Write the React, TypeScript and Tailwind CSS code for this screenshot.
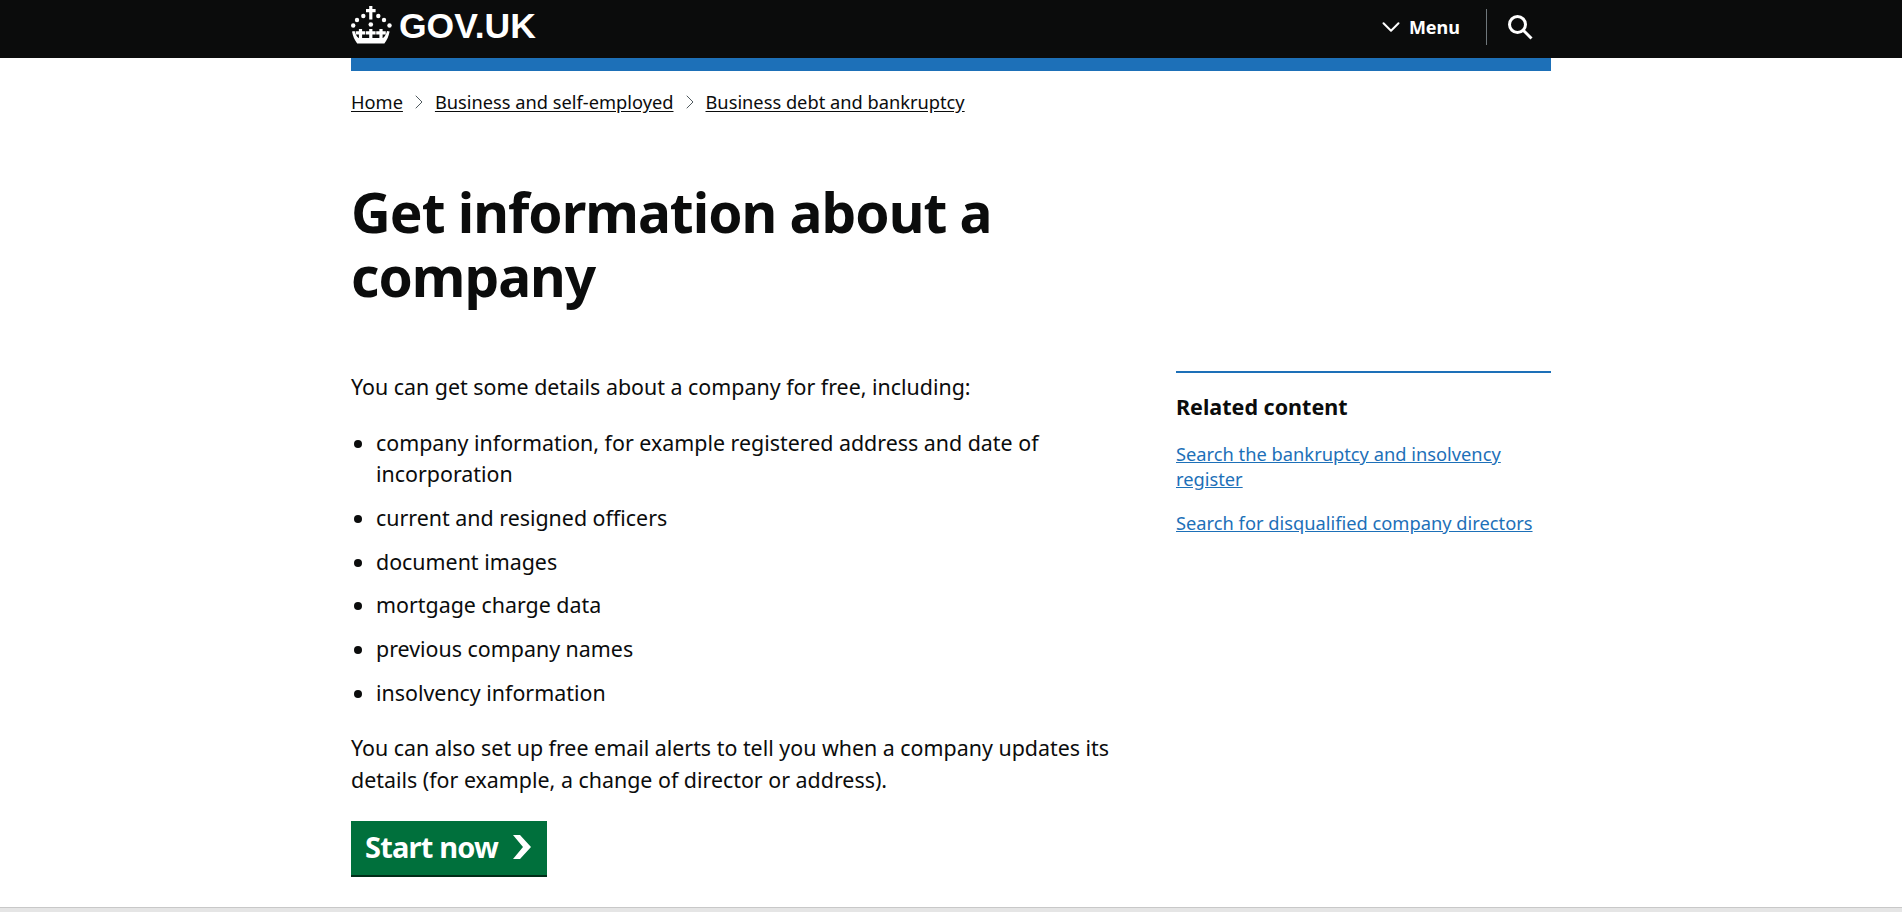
import React from 'react';
import { ChevronRight, ChevronDown } from 'lucide-react';

const listItems = [
  'company information, for example registered address and date of incorporation',
  'current and resigned officers',
  'document images',
  'mortgage charge data',
  'previous company names',
  'insolvency information',
];

const Fleur = ({ x }: { x: number }) => (
  <path d={`M${x - 1.6} 23h3.2v2.2h3.2v3.2h-3.2V34h-3.2v-5.6h-3.2v-3.2h3.2z`} />
);

const Crown = () => (
  <svg width="41" height="38" viewBox="0 0 41 38" fill="#fff" aria-hidden="true" className="mb-[4px]">
    <path d="M18.2 0h3.2v3h3.2v3.2h-3.2V13.5h-3.2V6.2H15V3h3.2z" />
    <circle cx="12.3" cy="10" r="2.2" />
    <circle cx="27.3" cy="10" r="2.2" />
    <circle cx="6" cy="14" r="2.2" />
    <circle cx="33" cy="14" r="2.2" />
    <circle cx="2.2" cy="19.5" r="2.2" />
    <circle cx="38.5" cy="19.5" r="2.2" />
    <circle cx="19.8" cy="18.5" r="2.3" />
    <Fleur x={9.5} />
    <Fleur x={19.8} />
    <Fleur x={30} />
    <path d="M1 25.5l2.6-.5c.8 3 2 5.5 4 7h24.4c2-1.5 3.2-4 4-7l2.6.5c-.8 4.5-2.6 8.5-5.2 12H6.2C3.6 34 1.8 30 1 25.5z" />
  </svg>
);

export default function App() {
  return (
    <div className='h-[912px] overflow-hidden bg-white text-[#0b0c0c] relative font-["Noto_Sans",Roboto,sans-serif]'>
      <header className="bg-[#0b0c0c] h-[58px]">
        <div className="w-[1200px] ml-[351px] flex items-center justify-between h-full">
          <div className="flex items-center gap-[7px] mb-[4px]">
            <Crown />
            <span className='font-["Liberation_Sans",Arial,sans-serif] font-bold text-[35.5px] leading-none text-white'>GOV.UK</span>
          </div>
          <div className="flex items-center text-white mb-[4px]">
            <ChevronDown className="w-[30px] h-[30px] mr-[3px]" strokeWidth={1.6} />
            <span className="font-bold text-[18px] mr-[26px]">Menu</span>
            <div className="w-px h-[36px] bg-[#6f777b] mr-[20px]" />
            <svg width="26" height="26" viewBox="0 0 26 26" fill="none" stroke="#fff" strokeWidth="3" className="mr-[18px]">
              <circle cx="10.5" cy="10.5" r="8" />
              <path d="M16.5 16.5L24.5 24.5" />
            </svg>
          </div>
        </div>
      </header>
      <div className="w-[1200px] ml-[351px]">
        <div className="h-[13px] bg-[#1d70b8]" />
        <nav className="flex items-center mt-[18px] text-[18.25px] leading-[25px]">
          <a className="underline underline-offset-2">Home</a>
          <ChevronRight className="w-[24px] h-[24px] mx-[4px] text-[#505a5f]" strokeWidth={1} />
          <a className="underline underline-offset-2">Business and self-employed</a>
          <ChevronRight className="w-[24px] h-[24px] mx-[4px] text-[#505a5f]" strokeWidth={1} />
          <a className="underline underline-offset-2">Business debt and bankruptcy</a>
        </nav>
        <h1 className="mt-[66px] w-[760px] font-bold text-[55px] tracking-[-1px] leading-[64px]">Get information about a company</h1>
        <div className="flex mt-[63px]">
          <main className="w-[825px] pr-[60px] text-[21.4px] leading-[31.5px]">
            <p>You can get some details about a company for free, including:</p>
            <ul className="list-disc pl-[25px] mt-[24px]">
              {listItems.map((item) => (
                <li key={item} className="mb-[12.25px]">{item}</li>
              ))}
            </ul>
            <p className="mt-[24px]">You can also set up free email alerts to tell you when a company updates its details (for example, a change of director or address).</p>
            <button className="mt-[26px] h-[56px] w-[196px] pl-[14px] pb-[3px] bg-[#00703c] border-b-2 border-[#002d18] text-white font-bold text-[29px] tracking-[-0.8px] flex items-center gap-[15px]">
              Start now
              <svg width="18" height="24" viewBox="0 0 18 24" fill="#fff"><path d="M0 0h7l11 12L7 24H0l10-12z" /></svg>
            </button>
          </main>
          <aside className="w-[375px] border-t-2 border-[#1d70b8] h-fit">
            <h2 className="font-bold text-[21.5px] mt-[18px]">Related content</h2>
            <ul className="mt-[18px] text-[18.3px] leading-[25px] text-[#1d70b8] underline">
              <li className="mb-[19px]">Search the bankruptcy and insolvency register</li>
              <li>Search for disqualified company directors</li>
            </ul>
          </aside>
        </div>
      </div>
      <div className="absolute bottom-0 left-0 right-0 h-[5px] bg-[#e5e5e5] border-t border-[#c8c8c8]" />
    </div>
  );
}
